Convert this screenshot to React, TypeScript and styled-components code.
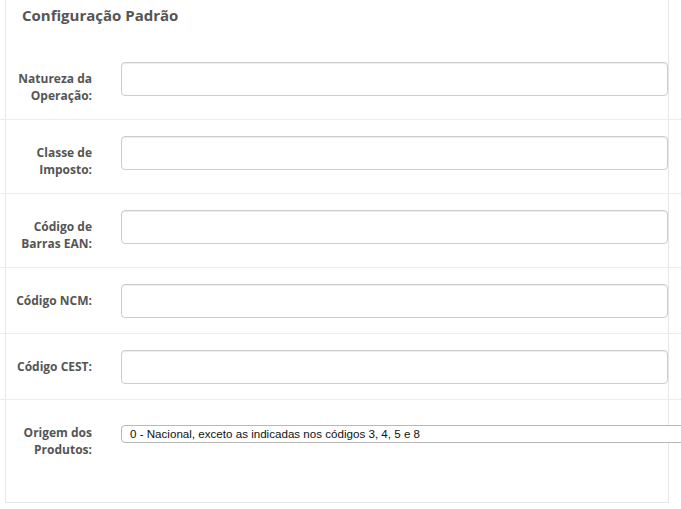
import { createGlobalStyle } from 'styled-components';
import styled from 'styled-components';

const GlobalStyle = createGlobalStyle`
	html, body {
		margin: 0;
		padding: 0;
		background: #fff;
		overflow: hidden;
	}
	body {
		font-family: 'Open Sans', 'Liberation Sans', sans-serif;
		color: #555;
	}
`;

type Field = { id: string; label: string };

const fields: Field[] = [
	{ id: 'natureza', label: 'Natureza da Operação:' },
	{ id: 'classe', label: 'Classe de Imposto:' },
	{ id: 'ean', label: 'Código de Barras EAN:' },
	{ id: 'ncm', label: 'Código NCM:' },
	{ id: 'cest', label: 'Código CEST:' },
];

const App = () => {
	return (
		<Page>
			<GlobalStyle />
			<Panel>
				<Header>
					<Title>Configuração Padrão</Title>
				</Header>
				{fields.map((field) => (
					<Row key={field.id}>
						<Label htmlFor={field.id}>{field.label}</Label>
						<Input id={field.id} type="text" />
					</Row>
				))}
				<Row $last>
					<Label htmlFor="origem">Origem dos Produtos:</Label>
					<Select id="origem" defaultValue="0">
						<option value="0">0 - Nacional, exceto as indicadas nos códigos 3, 4, 5 e 8</option>
					</Select>
				</Row>
			</Panel>
		</Page>
	);
};

export default App;

const Page = styled.div`
	width: 681px;
	height: 509px;
	overflow: hidden;
`;

const Panel = styled.div`
	margin-left: 5px;
	width: 662px;
	border: 1px solid #e6e6e6;
	border-top: none;
	padding-bottom: 29px;
	background: #fff;
`;

const Header = styled.div`
	height: 41px;
	padding: 5px 0 0 16px;
`;

const Title = styled.h3`
	margin: 0;
	font-size: 15px;
	line-height: 20px;
	font-weight: 700;
	color: #555;
`;

const Row = styled.div<{ $last?: boolean }>`
	display: flex;
	align-items: flex-start;
	margin: 0 -13px 0 -6px;
	padding: 16px 13px 15px 6px;
	border-bottom: ${({ $last }) => ($last ? 'none' : '1px solid #ececec')};
`;

const Label = styled.label`
	flex: 0 0 86px;
	box-sizing: border-box;
	padding: 9px 0 0 6px;
	margin-right: 29px;
	text-align: right;
	font-size: 12px;
	line-height: 16.5px;
	font-weight: 700;
	color: #555;
`;

const Input = styled.input`
	flex: 1;
	min-width: 0;
	box-sizing: border-box;
	height: 34px;
	margin: 0;
	padding: 6px 12px;
	border: 1px solid #ccc;
	border-radius: 4px;
	background: #fff;
	box-shadow: inset 0 1px 1px rgba(0, 0, 0, 0.075);
	font-family: 'Open Sans', sans-serif;
	font-size: 12px;
	color: #555;
	outline: none;
`;

const Select = styled.select`
	flex: 0 0 640px;
	box-sizing: border-box;
	height: 18px;
	margin: 9px 0 0;
	padding: 0 8px;
	appearance: none;
	border: 1px solid #b8b8b8;
	border-radius: 4px;
	background: #fff;
	font-family: 'Liberation Sans', Helvetica, Arial, sans-serif;
	font-size: 11.6px;
	line-height: 16px;
	color: #111;
	outline: none;
`;
